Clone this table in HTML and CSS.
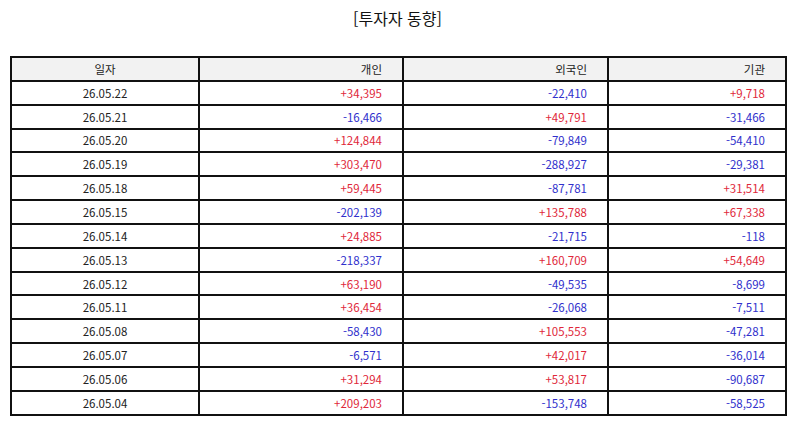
FILE: index.html
```html
<!DOCTYPE html>
<html lang="ko">
<head>
<meta charset="utf-8">
<link rel="stylesheet" href="styles.css">
</head>
<body>
<div class="page">
  <h1 class="title">[투자자 동향]</h1>
  <table class="grid">
    <colgroup>
      <col class="c-date"><col class="c-ind"><col class="c-for"><col class="c-inst">
    </colgroup>
    <thead>
      <tr><th class="center">일자</th><th>개인</th><th>외국인</th><th>기관</th></tr>
    </thead>
    <tbody>
      <tr><td class="center">26.05.22</td><td class="up">+34,395</td><td class="down">-22,410</td><td class="up">+9,718</td></tr>
      <tr><td class="center">26.05.21</td><td class="down">-16,466</td><td class="up">+49,791</td><td class="down">-31,466</td></tr>
      <tr><td class="center">26.05.20</td><td class="up">+124,844</td><td class="down">-79,849</td><td class="down">-54,410</td></tr>
      <tr><td class="center">26.05.19</td><td class="up">+303,470</td><td class="down">-288,927</td><td class="down">-29,381</td></tr>
      <tr><td class="center">26.05.18</td><td class="up">+59,445</td><td class="down">-87,781</td><td class="up">+31,514</td></tr>
      <tr><td class="center">26.05.15</td><td class="down">-202,139</td><td class="up">+135,788</td><td class="up">+67,338</td></tr>
      <tr><td class="center">26.05.14</td><td class="up">+24,885</td><td class="down">-21,715</td><td class="down">-118</td></tr>
      <tr><td class="center">26.05.13</td><td class="down">-218,337</td><td class="up">+160,709</td><td class="up">+54,649</td></tr>
      <tr><td class="center">26.05.12</td><td class="up">+63,190</td><td class="down">-49,535</td><td class="down">-8,699</td></tr>
      <tr><td class="center">26.05.11</td><td class="up">+36,454</td><td class="down">-26,068</td><td class="down">-7,511</td></tr>
      <tr><td class="center">26.05.08</td><td class="down">-58,430</td><td class="up">+105,553</td><td class="down">-47,281</td></tr>
      <tr><td class="center">26.05.07</td><td class="down">-6,571</td><td class="up">+42,017</td><td class="down">-36,014</td></tr>
      <tr><td class="center">26.05.06</td><td class="up">+31,294</td><td class="up">+53,817</td><td class="down">-90,687</td></tr>
      <tr><td class="center">26.05.04</td><td class="up">+209,203</td><td class="down">-153,748</td><td class="down">-58,525</td></tr>
    </tbody>
  </table>
</div>
</body>
</html>
```
FILE: styles.css
```css
html, body {
  margin: 0;
  padding: 0;
  background: #ffffff;
}
body {
  font-family: "Noto Sans CJK KR", "Noto Sans", sans-serif;
  color: #222222;
}
.page {
  padding: 0 9px 0 10px;
}
.title {
  margin: 0;
  height: 56px;
  padding-top: 6px;
  box-sizing: border-box;
  text-align: center;
  font-size: 16px;
  font-weight: 400;
  line-height: 24px;
  color: #111111;
}
.grid {
  width: 100%;
  border-collapse: collapse;
  table-layout: fixed;
  font-size: 11.5px;
}
.c-date { width: 188px; }
.c-ind { width: 204px; }
.c-for { width: 205px; }
.c-inst { width: 178px; }
.grid th, .grid td {
  border: 2px solid #111111;
  height: 21.85px;
  padding: 0 20px 0 8px;
  text-align: right;
  font-weight: 400;
  line-height: 14px;
  white-space: nowrap;
}
.grid th {
  background: #f2f2f2;
  color: #222222;
}
.grid .center {
  text-align: center;
  padding: 0;
}
.up { color: #e0283a; }
.down { color: #3030cc; }
```
